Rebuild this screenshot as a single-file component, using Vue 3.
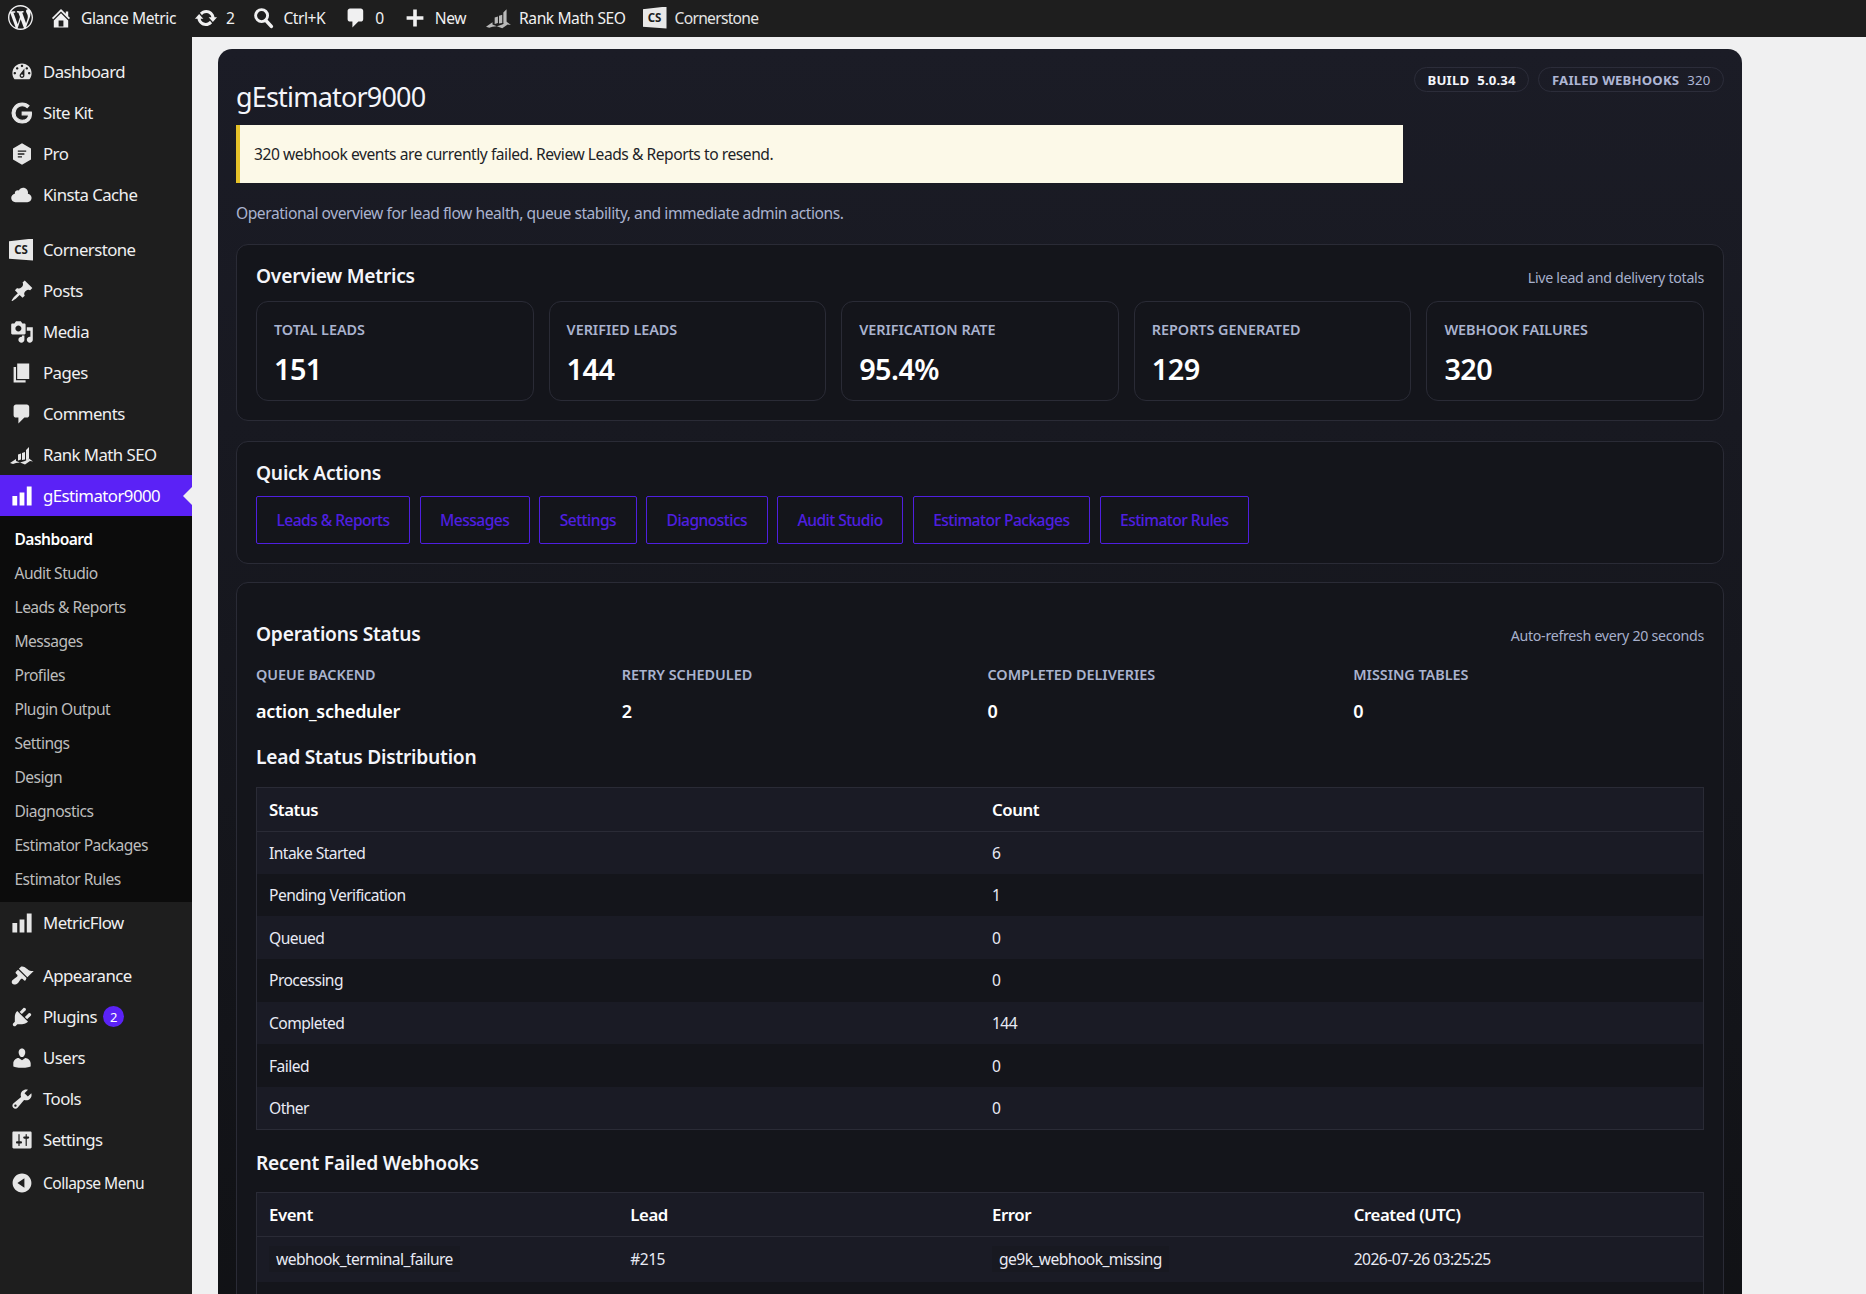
<template>
  <div class="wp-page">
    <!-- admin bar -->
    <header class="adminbar">
      <span class="bar-item logo"><svg class="bar-icon" viewBox="0 0 20 20"><path :d="icons.wordpress" /></svg></span>
      <span class="bar-item home"><svg class="bar-icon small" viewBox="0 0 20 20"><path :d="icons.home" fill-rule="evenodd" /></svg>Glance Metric</span>
      <span class="bar-item upd"><svg class="bar-icon small" viewBox="0 0 20 20"><path :d="icons.update" /></svg>2</span>
      <span class="bar-item srch">
        <svg class="bar-icon small" viewBox="0 0 20 20"><circle cx="8" cy="8" r="5" fill="none" stroke="currentColor" stroke-width="2.4" /><path d="M11.5 12l4.6 5" stroke="currentColor" stroke-width="3" stroke-linecap="round" /></svg>Ctrl+K
      </span>
      <span class="bar-item cmt"><svg class="bar-icon small" viewBox="0 0 20 20"><path :d="icons.comments" /></svg>0</span>
      <span class="bar-item new"><svg class="bar-icon small" viewBox="0 0 20 20"><path :d="icons.plus" /></svg>New</span>
      <span class="bar-item bar-rank"><svg class="bar-icon wide dim" viewBox="0 0 24 20"><path :d="icons.rank" /></svg>Rank Math SEO</span>
      <span class="bar-item cs"><span class="cs-badge">CS</span><span class="dim-text">Cornerstone</span></span>
    </header>

    <div class="layout">
      <!-- sidebar -->
      <nav class="sidebar">
        <template v-for="item in menu" :key="item.label">
          <a class="menu-item" :class="{ sep: item.sep, near: item.near, active: item.active }">
            <span v-if="item.icon === 'cs'" class="cs-badge side">CS</span>
            <svg v-else class="menu-icon" :class="item.icon" :viewBox="item.box || '0 0 20 20'"><path :d="icons[item.icon]" fill-rule="evenodd" /></svg>
            <span>{{ item.label }}</span>
            <span v-if="item.badge" class="count">{{ item.badge }}</span>
          </a>
          <div v-if="item.active" class="submenu">
            <a v-for="(s, i) in submenu" :key="s" class="sub-item" :class="{ current: i === 0 }">{{ s }}</a>
          </div>
        </template>
        <a class="menu-item collapse">
          <svg class="menu-icon" viewBox="0 0 20 20"><path :d="icons.collapse" /></svg>
          <span>Collapse Menu</span>
        </a>
      </nav>

      <!-- content -->
      <main class="content">
        <div class="panel">
          <div class="panel-head">
            <h1>gEstimator9000</h1>
            <div class="pills">
              <span class="pill"><b>BUILD</b><b>5.0.34</b></span>
              <span class="pill muted"><b>FAILED WEBHOOKS</b><em>320</em></span>
            </div>
          </div>
          <div class="notice">320 webhook events are currently failed. Review Leads &amp; Reports to resend.</div>
          <p class="lede">Operational overview for lead flow health, queue stability, and immediate admin actions.</p>

          <section class="box">
            <div class="box-head">
              <h2>Overview Metrics</h2>
              <span class="hint">Live lead and delivery totals</span>
            </div>
            <div class="metrics">
              <div v-for="m in metrics" :key="m.label" class="metric">
                <div class="metric-label">{{ m.label }}</div>
                <div class="metric-value">{{ m.value }}</div>
              </div>
            </div>
          </section>

          <section class="box quick">
            <div class="box-head tight">
              <h2>Quick Actions</h2>
            </div>
            <div class="actions">
              <a v-for="a in actions" :key="a" class="action">{{ a }}</a>
            </div>
          </section>

          <section class="box ops">
            <div class="box-head ops-head">
              <h2>Operations Status</h2>
              <span class="hint">Auto-refresh every 20 seconds</span>
            </div>
            <div class="ops-grid">
              <div v-for="o in ops" :key="o.label">
                <div class="ops-label">{{ o.label }}</div>
                <div class="ops-value">{{ o.value }}</div>
              </div>
            </div>

            <h2 class="table-title first">Lead Status Distribution</h2>
            <table class="table">
              <thead>
                <tr><th>Status</th><th>Count</th></tr>
              </thead>
              <tbody>
                <tr v-for="r in statuses" :key="r.name">
                  <td>{{ r.name }}</td>
                  <td>{{ r.count }}</td>
                </tr>
              </tbody>
            </table>

            <h2 class="table-title">Recent Failed Webhooks</h2>
            <table class="table webhooks">
              <thead>
                <tr><th>Event</th><th>Lead</th><th>Error</th><th>Created (UTC)</th></tr>
              </thead>
              <tbody>
                <tr>
                  <td><code>webhook_terminal_failure</code></td>
                  <td>#215</td>
                  <td><code>ge9k_webhook_missing</code></td>
                  <td>2026-07-26 03:25:25</td>
                </tr>
                <tr><td colspan="4">&nbsp;</td></tr>
              </tbody>
            </table>
          </section>
        </div>
      </main>
    </div>
  </div>
</template>

<script setup>
const icons = {
  wordpress: 'M20 10c0-5.51-4.49-10-10-10C4.48 0 0 4.49 0 10c0 5.52 4.48 10 10 10 5.51 0 10-4.48 10-10zM7.78 15.37L4.37 6.22c.55-.02 1.17-.08 1.17-.08.5-.06.44-1.13-.06-1.11 0 0-1.45.11-2.37.11-.18 0-.37 0-.58-.01C4.12 2.69 6.87 1.11 10 1.11c2.33 0 4.45.87 6.05 2.34-.68-.11-1.65.39-1.65 1.58 0 .74.45 1.36.9 2.1.35.61.55 1.36.55 2.46 0 1.49-1.4 5-1.4 5l-3.03-8.37c.54-.02.82-.17.82-.17.5-.05.44-1.25-.06-1.22 0 0-1.44.12-2.38.12-.87 0-2.33-.12-2.33-.12-.5-.03-.56 1.2-.06 1.22l.92.08 1.26 3.41zM17.41 10c.24-.64.74-1.87.43-4.25.7 1.29 1.05 2.71 1.05 4.25 0 3.29-1.73 6.24-4.4 7.78.97-2.59 1.94-5.2 2.92-7.78zM6.1 18.09C3.12 16.65 1.11 13.53 1.11 10c0-1.3.23-2.48.72-3.59C3.25 10.3 4.67 14.2 6.1 18.09zm4.03-6.63l2.58 6.98c-.86.29-1.76.45-2.71.45-.79 0-1.57-.11-2.29-.33.81-2.38 1.62-4.74 2.42-7.1z',
  home: 'M16 8.5l1.53 1.53-1.06 1.06L10 4.62l-6.47 6.47-1.06-1.06L10 2.5l4 4v-2h2v4zm-6-2.46l6 5.99V18H4v-5.97zM12 17v-5H8v5h4z',
  update: 'M10.2 3.28c3.53 0 6.43 2.61 6.92 6h2.08l-3.5 4-3.5-4h2.32c-.45-1.97-2.21-3.45-4.32-3.45-1.45 0-2.73.71-3.54 1.78L4.95 5.66C6.23 4.2 8.11 3.28 10.2 3.28zm-.4 13.44c-3.52 0-6.43-2.61-6.92-6H.8l3.5-4c1.17 1.33 2.33 2.67 3.5 4H5.48c.45 1.97 2.21 3.45 4.32 3.45 1.45 0 2.73-.71 3.54-1.78l1.71 1.95c-1.28 1.46-3.15 2.38-5.25 2.38z',
  comments: 'M5 2h9c1.1 0 2 .9 2 2v7c0 1.1-.9 2-2 2h-2l-5 5v-5H5c-1.1 0-2-.9-2-2V4c0-1.1.9-2 2-2z',
  plus: 'M17 8.5v3h-5.5V17h-3v-5.5H3v-3h5.5V3h3v5.5z',
  rank: 'M8 9.5l3-1v6l-3 1zM12 8l3-1v7.5l-3 .5zM16 5l3-3v12l-3 1zM0 18l6-4v2l4 1.5 5-1.5 4-2.5 4 3-3-.5-5 3.5-5-2-4 .5-3 1z',
  dashboard: 'M3.76 16h12.48c1.1-1.37 1.76-3.11 1.76-5 0-4.42-3.58-8-8-8s-8 3.58-8 8c0 1.89.66 3.63 1.76 5zM10 4c.55 0 1 .45 1 1s-.45 1-1 1-1-.45-1-1 .45-1 1-1zM6 6c.55 0 1 .45 1 1s-.45 1-1 1-1-.45-1-1 .45-1 1-1zm8 0c.55 0 1 .45 1 1s-.45 1-1 1-1-.45-1-1 .45-1 1-1zm-5.37 5.55L12 7v6c0 1.1-.9 2-2 2s-2-.9-2-2c0-.57.24-1.08.63-1.45zM4 10c.55 0 1 .45 1 1s-.45 1-1 1-1-.45-1-1 .45-1 1-1zm12 0c.55 0 1 .45 1 1s-.45 1-1 1-1-.45-1-1 .45-1 1-1zm-5 3c0-.55-.45-1-1-1s-1 .45-1 1 .45 1 1 1 1-.45 1-1z',
  google: 'M21.35 11.1h-9.17v2.73h6.51c-.33 3.81-3.5 5.44-6.5 5.44C8.36 19.27 5 16.25 5 12c0-4.1 3.2-7.27 7.2-7.27 3.09 0 4.9 1.97 4.9 1.97L19 4.72S16.56 2 12.1 2C6.42 2 2.03 6.8 2.03 12c0 5.05 4.13 10 10.22 10 5.35 0 9.25-3.67 9.25-9.09 0-1.15-.15-1.81-.15-1.81z',
  pro: 'M10 1l7.5 4.4v9.2L10 19l-7.5-4.4V5.4zM6.5 7v1.2h7V7zm0 2.4v1.2h5.5V9.4zm0 2.4V13h3.5v-1.2z',
  cloud: 'M14.9 9c1.8.2 3.1 1.7 3.1 3.5 0 1.9-1.6 3.5-3.5 3.5h-10C2.6 16 1 14.4 1 12.5 1 10.7 2.3 9.3 4.1 9 4 8.9 4 8.7 4 8.5 4 7.1 5.1 6 6.5 6c.3 0 .7.1.9.2C8.1 4.9 9.4 4 11 4c2.2 0 4 1.8 4 4 0 .4-.1.7-.1 1z',
  post: 'M10.44 3.02l1.82-1.82 6.36 6.35-1.83 1.82c-1.05-.68-2.48-.57-3.41.36l-.75.75c-.92.93-1.04 2.35-.35 3.41l-1.83 1.82-2.41-2.41-2.8 2.79c-.42.42-3.38 2.71-3.8 2.29s1.86-3.39 2.28-3.81l2.79-2.79L4.1 9.36l1.83-1.82c1.05.69 2.48.57 3.4-.36l.75-.75c.93-.92 1.05-2.35.36-3.41z',
  media: 'M13 11V4c0-.55-.45-1-1-1h-1.67L9 1H5L3.67 3H2c-.55 0-1 .45-1 1v7c0 .55.45 1 1 1h10c.55 0 1-.45 1-1zM7 4.5c1.38 0 2.5 1.12 2.5 2.5S8.38 9.5 7 9.5 4.5 8.38 4.5 7 5.62 4.5 7 4.5zM14 6h5v10.5c0 1.38-1.12 2.5-2.5 2.5S14 17.88 14 16.5s1.12-2.5 2.5-2.5c.17 0 .34.02.5.05V9h-3V6zm-4 8.05V13h2v3.5c0 1.38-1.12 2.5-2.5 2.5S7 17.88 7 16.5 8.12 14 9.5 14c.17 0 .34.02.5.05z',
  page: 'M6 15V2h10v13H6zm-1 1h8v2H3V5h2v11z',
  chart: 'M18 18V2h-4v16h4zm-6 0V7H8v11h4zm-6 0v-8H2v8h4z',
  appearance: 'M14.48 11.06L7.41 3.99l1.5-1.5c.5-.56 2.3-.47 3.51.32 1.21.8 1.43 1.28 2.91 2.1 1.18.64 2.45 1.26 4.45.85zm-.71.71L6.7 4.7 4.93 6.47c-.39.39-.39 1.02 0 1.41l1.06 1.06c.39.39.39 1.03 0 1.42-.6.6-1.43 1.11-2.21 1.69-.35.26-.7.53-1.01.84C1.43 13.23.99 15.5 2 16.5s3.27.57 4.61-.77c.31-.31.58-.66.84-1.01.58-.78 1.09-1.61 1.69-2.21.39-.39 1.03-.39 1.42 0l1.06 1.06c.39.39 1.02.39 1.41 0z',
  plugins: 'M13.11 4.36L9.87 7.6 8 5.73l3.24-3.24c.35-.34 1.05-.2 1.56.32.52.51.66 1.21.31 1.55zm-8 1.77l.91-1.12 9.01 9.01-1.19.84c-.71.71-2.63 1.16-3.82 1.16H6.14L4.9 17.26c-.59.59-1.54.59-2.12 0-.59-.58-.59-1.53 0-2.12l1.24-1.24v-3.88c0-1.13.4-3.19 1.09-3.89zm7.26 3.97l3.24-3.24c.34-.35 1.04-.21 1.55.31.52.51.66 1.21.31 1.55l-3.24 3.25z',
  users: 'M10 9.25c-2.27 0-2.73-3.44-2.73-3.44C7 4.02 7.82 2 9.97 2c2.16 0 2.98 2.02 2.71 3.81 0 0-.41 3.44-2.68 3.44zm0 2.57L12.72 10c2.39 0 4.52 2.33 4.52 4.53v2.49s-3.65 1.13-7.24 1.13c-3.65 0-7.24-1.13-7.24-1.13v-2.49c0-2.25 1.94-4.48 4.47-4.48z',
  tools: 'M16.68 9.77c-1.34 1.34-3.3 1.67-4.95.99l-5.41 6.52c-.99.99-2.59.99-3.58 0s-.99-2.59 0-3.57l6.52-5.42c-.68-1.65-.35-3.61.99-4.95 1.28-1.28 3.12-1.62 4.72-1.06l-2.89 2.89 2.82 2.82 2.86-2.87c.53 1.58.18 3.39-1.08 4.65zM3.81 16.21c.4.39 1.04.39 1.43 0 .4-.4.4-1.04 0-1.43-.39-.4-1.03-.4-1.43 0-.39.39-.39 1.03 0 1.43z',
  settings: 'M18 16V4c0-.55-.45-1-1-1H3c-.55 0-1 .45-1 1v12c0 .55.45 1 1 1h14c.55 0 1-.45 1-1zM8 11h1c.55 0 1 .45 1 1s-.45 1-1 1H8v1.5c0 .28-.22.5-.5.5s-.5-.22-.5-.5V13H6c-.55 0-1-.45-1-1s.45-1 1-1h1V5.5c0-.28.22-.5.5-.5s.5.22.5.5V11zm5-2h-1c-.55 0-1-.45-1-1s.45-1 1-1h1V5.5c0-.28.22-.5.5-.5s.5.22.5.5V7h1c.55 0 1 .45 1 1s-.45 1-1 1h-1v5.5c0 .28-.22.5-.5.5s-.5-.22-.5-.5V9z',
  collapse: 'M10 2.16c4.33 0 7.84 3.51 7.84 7.84s-3.51 7.84-7.84 7.84S2.16 14.33 2.16 10 5.71 2.16 10 2.16zm2 11.72V6.12L6.18 9.97z',
}

const menu = [
  { label: 'Dashboard', icon: 'dashboard' },
  { label: 'Site Kit', icon: 'google', box: '0 0 24 24' },
  { label: 'Pro', icon: 'pro' },
  { label: 'Kinsta Cache', icon: 'cloud' },
  { label: 'Cornerstone', icon: 'cs', sep: true },
  { label: 'Posts', icon: 'post' },
  { label: 'Media', icon: 'media' },
  { label: 'Pages', icon: 'page' },
  { label: 'Comments', icon: 'comments' },
  { label: 'Rank Math SEO', icon: 'rank', box: '0 0 24 20' },
  { label: 'gEstimator9000', icon: 'chart', active: true },
  { label: 'MetricFlow', icon: 'chart' },
  { label: 'Appearance', icon: 'appearance', sep: true, near: true },
  { label: 'Plugins', icon: 'plugins', badge: 2 },
  { label: 'Users', icon: 'users' },
  { label: 'Tools', icon: 'tools' },
  { label: 'Settings', icon: 'settings' },
]

const submenu = ['Dashboard', 'Audit Studio', 'Leads & Reports', 'Messages', 'Profiles', 'Plugin Output', 'Settings', 'Design', 'Diagnostics', 'Estimator Packages', 'Estimator Rules']

const metrics = [
  { label: 'TOTAL LEADS', value: '151' },
  { label: 'VERIFIED LEADS', value: '144' },
  { label: 'VERIFICATION RATE', value: '95.4%' },
  { label: 'REPORTS GENERATED', value: '129' },
  { label: 'WEBHOOK FAILURES', value: '320' },
]

const actions = ['Leads & Reports', 'Messages', 'Settings', 'Diagnostics', 'Audit Studio', 'Estimator Packages', 'Estimator Rules']

const ops = [
  { label: 'QUEUE BACKEND', value: 'action_scheduler' },
  { label: 'RETRY SCHEDULED', value: '2' },
  { label: 'COMPLETED DELIVERIES', value: '0' },
  { label: 'MISSING TABLES', value: '0' },
]

const statuses = [
  { name: 'Intake Started', count: 6 },
  { name: 'Pending Verification', count: 1 },
  { name: 'Queued', count: 0 },
  { name: 'Processing', count: 0 },
  { name: 'Completed', count: 144 },
  { name: 'Failed', count: 0 },
  { name: 'Other', count: 0 },
]
</script>

<style>
html, body { margin: 0; background: #f0f0f1; }
</style>

<style scoped>
.wp-page {
  height: 1294px;
  overflow: hidden;
  display: flex;
  flex-direction: column;
  background: #f0f0f1;
  font-family: "Noto Sans", "Liberation Sans", sans-serif;
  font-size: 15.6px;
  letter-spacing: -0.035em;
  color: #f0f0f1;
}

/* admin bar */
.adminbar { height: 37px; flex: none; box-sizing: border-box; padding-bottom: 2px; display: flex; align-items: center; background: #1e1e1e; font-size: 15.6px; letter-spacing: -0.028em; }
.bar-item { display: flex; align-items: center; gap: 9px; white-space: nowrap; }
.bar-icon { width: 25px; height: 25px; fill: #f0f0f1; color: #f0f0f1; }
.bar-icon.small { width: 24px; height: 24px; margin: 0 -1px; }
.bar-icon.wide { width: 26px; height: 22px; }
.bar-icon.dim { fill: #b9b9b9; }
.logo { margin-left: 8px; }
.home { margin-left: 17px; }
.upd { margin-left: 19px; gap: 9px; }
.srch { margin-left: 19px; gap: 8px; }
.cmt { margin-left: 20px; gap: 8px; }
.new { margin-left: 20px; gap: 9px; }
.bar-rank { margin-left: 20px; gap: 7px; }
.cs { margin-left: 17px; gap: 8px; }
.dim-text { letter-spacing: -0.045em; color: #e4e4e4; }
.cs-badge {
  display: inline-flex; align-items: center; justify-content: center;
  width: 24px; height: 22px; flex: none;
  background: #e8e8e8; color: #1e1e1e;
  font-size: 11.5px; font-weight: 700; letter-spacing: 0;
  clip-path: polygon(0 12%, 100% 0, 100% 100%, 0 92%);
}
.cs-badge.side { margin-left: -1px; margin-right: 1px; }

/* sidebar */
.layout { flex: 1; display: flex; min-height: 0; }
.sidebar { width: 192px; flex: none; background: #1e1e1e; padding-top: 14px; font-size: 16.8px; }
.menu-item { position: relative; height: 41px; display: flex; align-items: center; gap: 9px; padding-left: 10px; color: #f0f0f1; }
.menu-item.sep { margin-top: 14px; }
.menu-item.near { margin-top: 12px; }
.menu-icon { width: 24px; height: 24px; flex: none; fill: #e6e6e6; }
.menu-icon.google { stroke: #e6e6e6; stroke-width: 1.1; }
.menu-item.active { background: #5b22f6; color: #fff; }
.menu-item.active .menu-icon { fill: #fff; }
.menu-item.active::after {
  content: ""; position: absolute; right: 0; top: 50%; margin-top: -9px;
  border: 9px solid transparent; border-right-color: #f0f0f1; border-left-width: 0;
}
.count {
  width: 21px; height: 21px; border-radius: 50%; margin-left: -3px;
  display: flex; align-items: center; justify-content: center;
  background: #5b22f6; color: #fff; font-size: 13px; letter-spacing: 0;
}
.submenu { background: #0c0c0c; padding: 6px 0; }
.sub-item { display: block; height: 34px; line-height: 34px; padding-left: 14.5px; font-size: 15.6px; color: #bdbdbd; }
.sub-item.current { color: #fff; font-weight: 600; }
.collapse { font-size: 15.6px; height: 40px; margin-top: 3px; }

/* panel */
.content { flex: 1; min-width: 0; padding: 12px 124px 0 26px; }
.panel {
  padding: 18px 18px 40px 18px;
  border-radius: 14px 14px 0 0;
  background: linear-gradient(180deg, #1b1c26 0%, #101114 100%);
}
.panel-head { display: flex; justify-content: space-between; align-items: flex-start; }
h1 { margin: 12px 0 10px; font-size: 27px; line-height: 36px; font-weight: 400; letter-spacing: -0.03em; color: #f4f5fa; }
.pills { display: flex; gap: 9px; }
.pill {
  height: 25px; display: flex; align-items: center; gap: 8px; padding: 0 12.6px; box-sizing: border-box;
  border: 1px solid #2c2d3a; border-radius: 13px;
  font-size: 13.2px; letter-spacing: .012em; color: #f4f5fa;
}
.pill b { font-weight: 700; }
.pill.muted { color: #aeb6d4; }
.pill em { font-style: normal; font-weight: 400; }
.notice {
  width: 1167px; height: 58px; box-sizing: border-box; display: flex; align-items: center;
  padding-left: 14px; background: #fcf9e8; border-left: 4px solid #e6c229; color: #1d2327; letter-spacing: -0.029em;
}
.lede { margin: 19px 0 20px; line-height: 22px; color: #aab3cf; letter-spacing: -0.029em; }

.box { background: #14151b; border: 1px solid #2a2b36; border-radius: 12px; padding: 19px; margin-bottom: 20px; }
.box.quick { margin-bottom: 18px; }
.box-head { display: flex; justify-content: space-between; align-items: center; margin-bottom: 13px; }
.box-head.tight { margin-bottom: 11px; }
h2 { margin: 0; font-size: 19.2px; line-height: 24px; font-weight: 600; letter-spacing: -0.012em; color: #f4f5fa; }
.hint { padding-top: 2px; font-size: 14.2px; color: #a7b0cc; letter-spacing: -0.02em; }

.metrics { display: grid; grid-template-columns: repeat(5, 1fr); gap: 15px; }
.metric { height: 100px; box-sizing: border-box; padding: 18px 17px 0; border: 1px solid #2a2b36; border-radius: 12px; }
.metric-label { line-height: 20px; font-size: 14.4px; font-weight: 600; letter-spacing: -0.002em; color: #aab3cf; }
.metric-value { margin-top: 11px; line-height: 36px; font-size: 28.8px; font-weight: 600; color: #fff; }

.actions { display: flex; gap: 9.5px; }
.action {
  height: 48px; display: flex; align-items: center; padding: 0 19.5px; box-sizing: border-box;
  border: 1px solid #4f1fe0; border-radius: 2px; color: #4f1fe0; font-weight: 500; letter-spacing: -0.035em;
}

.ops { padding-top: 39px; }
.ops-head { margin-bottom: 19px; }
.ops-grid { display: grid; grid-template-columns: repeat(4, 1fr); gap: 15px; }
.ops-label { line-height: 20px; font-size: 14.4px; font-weight: 600; letter-spacing: -0.002em; color: #aab3cf; }
.ops-value { margin-top: 14px; line-height: 24px; font-size: 18px; font-weight: 600; letter-spacing: -0.015em; color: #fff; }
.table-title { margin: 21px 0 17px; }
.table-title.first { margin: 21.5px 0 18px; }

.table { width: 100%; border-collapse: collapse; table-layout: fixed; border: 1px solid #2a2b36; color: #e8eaf4; }
.table th { height: 43px; padding: 0 12px; text-align: left; font-size: 16.8px; font-weight: 600; letter-spacing: -0.025em; color: #fff; background: #1a1b25; border-bottom: 1px solid #2a2b36; }
.table td { height: 42.67px; padding: 0 12px; box-sizing: border-box; }
.table tbody tr:nth-child(odd) td { background: #1a1b25; }
.table tbody tr:nth-child(even) td { background: #14151b; }
.webhooks td { height: 45px; }
code { display: inline-block; padding: 3px 7px; background: #181921; font-family: inherit; font-size: 15.6px; line-height: 20px; }
</style>
